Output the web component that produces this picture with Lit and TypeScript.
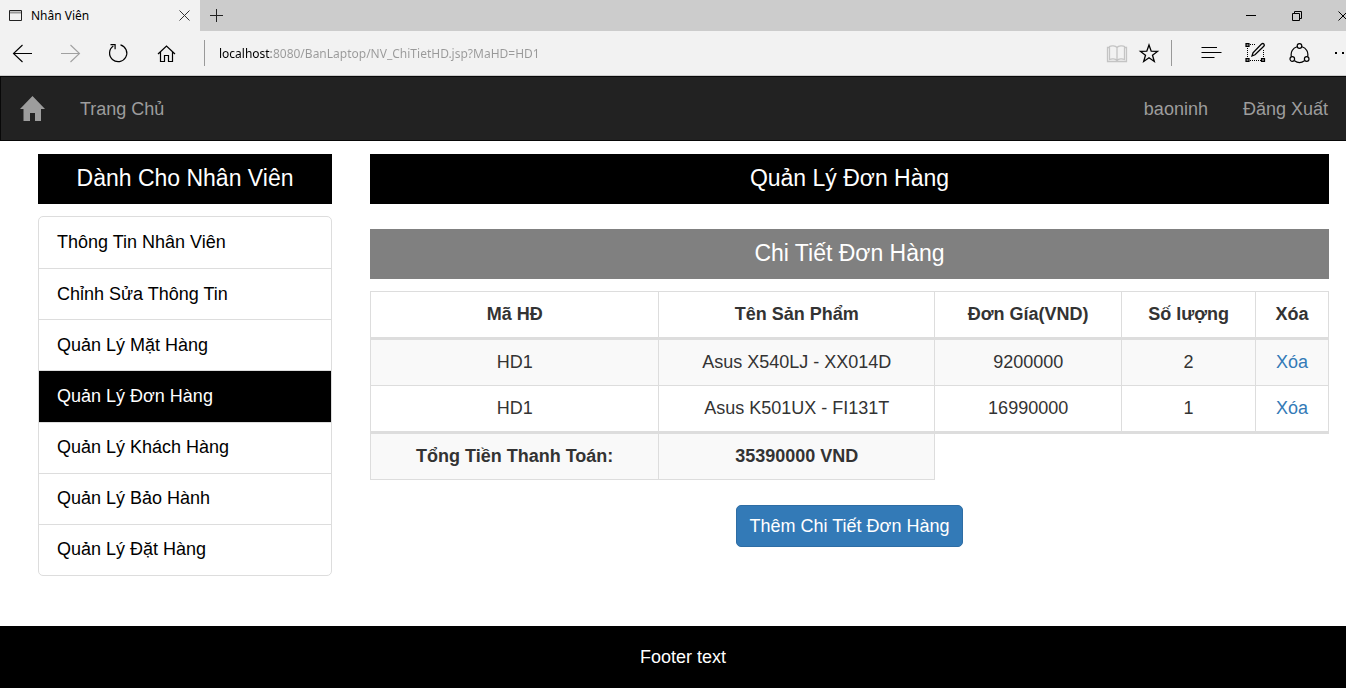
import { LitElement, html, css, svg } from "lit";
import { customElement, state } from "lit/decorators.js";

interface OrderLine {
  order: string;
  product: string;
  price: number;
  quantity: number;
}

const ICONS = {
  tab: svg`<path d="M1.5 2.5h12v10h-12z" stroke="#222"/><path d="M2 4.5h11" stroke="#999" stroke-width="2"/>`,
  close: svg`<path d="M2.5 2.5l10 10M12.500 2.500l-10 10" stroke="#333"/>`,
  plus: svg`<path d="M7.500 1v13M1 7.500h13" stroke="#222"/>`,
};

/** Edge-style tab strip and address bar. */
@customElement("browser-chrome")
export class BrowserChrome extends LitElement {
  static styles = css`
    :host {
      display: block;
      font-family: "Noto Sans", "Open Sans", sans-serif;
      font-size: 12px;
      color: #000;
      border-bottom: 1px solid #ccc;
    }
    svg {
      display: block;
      fill: none;
      stroke: currentColor;
    }
    button {
      display: flex;
      align-items: center;
      justify-content: center;
      padding: 0;
      border: 0;
      background: none;
      color: inherit;
      flex: none;
    }
    .strip {
      display: flex;
      height: 31px;
      background: #ccc;
    }
    .tab {
      display: flex;
      align-items: center;
      gap: 7px;
      width: 200px;
      padding: 0 8px;
      box-sizing: border-box;
      background: #f2f2f2;
    }
    .tab-title {
      flex: 1;
    }
    .new-tab {
      width: 32px;
    }
    .window-buttons {
      display: flex;
      margin-left: auto;
    }
    .window-buttons button {
      width: 46px;
    }
    .toolbar {
      display: flex;
      align-items: center;
      height: 44px;
      padding: 0 11px 0 10px;
      background: #f2f2f2;
    }
    .nav-buttons,
    .actions {
      display: flex;
      flex: none;
    }
    .nav-buttons {
      gap: 22px;
    }
    .actions {
      gap: 20px;
    }
    .page-actions {
      gap: 8px;
    }
    .dim {
      color: #a0a0a0;
    }
    .faint {
      color: #c4c4c4;
    }
    .rule {
      width: 1px;
      height: 26px;
      background: #999;
      flex: none;
    }
    .rule-left {
      margin: 0 14px 0 24px;
    }
    .rule-right {
      margin: 0 27px 0 10px;
    }
    .address {
      flex: 1;
      min-width: 0;
      height: 26px;
      padding: 0;
      border: 0;
      outline: 0;
      font: inherit;
      color: transparent;
      background: linear-gradient(to right, #000 52px, #999 52px);
      -webkit-background-clip: text;
      background-clip: text;
    }
  `;

  render() {
    return html`
      <div class="strip">
        <div class="tab">
          <svg width="16" height="16" viewBox="0 0 16 16">${ICONS.tab}</svg>
          <span class="tab-title">Nhân Viên</span>
          <button aria-label="Close tab">
            <svg width="15" height="15" viewBox="0 0 15 15">${ICONS.close}</svg>
          </button>
        </div>
        <button class="new-tab" aria-label="New tab">
          <svg width="15" height="15" viewBox="0 0 15 15">${ICONS.plus}</svg>
        </button>
        <div class="window-buttons">
          <button aria-label="Minimize">
            <svg width="12" height="12" viewBox="0 0 12 12"><path d="M1 5.500h10" /></svg>
          </button>
          <button aria-label="Restore">
            <svg width="12" height="12" viewBox="0 0 12 12">
              <path d="M1.500 3.500h7v7h-7zM3.500 3.500v-2h7v7h-2" />
            </svg>
          </button>
          <button aria-label="Close">
            <svg width="12" height="12" viewBox="0 0 12 12"><path d="M1.500 1.500l9 9M10.500 1.500l-9 9" /></svg>
          </button>
        </div>
      </div>
      <div class="toolbar">
        <div class="nav-buttons">
          <button aria-label="Back">
            <svg width="26" height="24" viewBox="0 0 26 24" stroke-width="1.100">
              <path d="M3.500 12.500H22M12.500 4l-9 8.500 9 8.500" />
            </svg>
          </button>
          <button class="dim" aria-label="Forward">
            <svg width="26" height="24" viewBox="0 0 26 24" stroke-width="1.100">
              <path d="M3 12.500h18.500M12.500 4l9 8.500-9 8.500" />
            </svg>
          </button>
          <button aria-label="Refresh">
            <svg width="26" height="24" viewBox="0 0 26 24" stroke-width="1.200">
              <path d="M14.500 3.800a8.600 8.600 0 1 1-7.200 1.200M4.500 3.600h4.600v4.700" />
            </svg>
          </button>
          <button aria-label="Home">
            <svg width="26" height="24" viewBox="0 0 26 24" stroke-width="1.200">
              <path d="M4 13l8.500-8 8.500 8M6.500 11v9.500h4v-6h4v6h4V11" />
            </svg>
          </button>
        </div>
        <span class="rule rule-left"></span>
        <input
          class="address"
          type="text"
          aria-label="Address"
          spellcheck="false"
          value="localhost:8080/BanLaptop/NV_ChiTietHD.jsp?MaHD=HD1"
        />
        <div class="actions page-actions">
          <button class="faint" aria-label="Reading view">
            <svg width="24" height="24" viewBox="0 0 24 24">
              <path
                d="M12 6.500c-1.500-2-6-2-7.500-1v13c2-1 6-1 7.500 1 1.500-2 5.500-2 7.500-1v-13c-1.500-1-6-1-7.500 1zM12 6v13M4 6.500H2.500v14h19v-14H20"
                stroke-width="1.300"
              />
            </svg>
          </button>
          <button aria-label="Favorites">
            <svg width="24" height="24" viewBox="0 0 24 24" stroke-width="1.300">
              <path d="M12 4l2.200 6.200 6.300.2-5 3.800 1.800 6.300-5.300-3.800-5.300 3.800 1.800-6.300-5-3.800 6.300-.2z" />
            </svg>
          </button>
        </div>
        <span class="rule rule-right"></span>
        <div class="actions">
          <button aria-label="Hub">
            <svg width="24" height="24" viewBox="0 0 24 24" stroke-width="1">
              <path d="M2.500 6.500h15.500M2.500 11.500h20M2.500 16.500h13" />
            </svg>
          </button>
          <button aria-label="Web note">
            <svg width="24" height="24" viewBox="0 0 24 24">
              <path d="M7 3.500h6M4.500 7v10M20.500 9v8M7 19.500h11" stroke-dasharray="1 1" />
              <path
                d="M3 2.500h3v3H3zM3 17.500h3v3H3zM18.500 17.500h3v3h-3z"
                fill="#777"
                stroke-width="1.200"
              />
              <path d="M9 15l1-3.200L18.500 3q1.500-1 2.500.2.800 1-.2 2L12 13.800z" stroke-width="1.300" />
            </svg>
          </button>
          <button aria-label="Share">
            <svg width="24" height="24" viewBox="0 0 24 24" stroke-width="1.200">
              <circle cx="12.500" cy="5" r="2.300" />
              <circle cx="5.300" cy="18" r="2.300" />
              <circle cx="19.700" cy="18" r="2.300" />
              <path d="M10 5.700a8.300 8.300 0 0 0-5.600 10M15 5.700a8.300 8.300 0 0 1 5.600 10M7.500 19.800a8.300 8.300 0 0 0 10 0" />
            </svg>
          </button>
          <button aria-label="More">
            <svg width="24" height="24" viewBox="0 0 24 24">
              <path d="M4 12h2M11 12h2M18 12h2" stroke-width="2" />
            </svg>
          </button>
        </div>
      </div>
    `;
  }
}

@customElement("app-root")
export class AppRoot extends LitElement {
  static styles = css`
    :host {
      display: block;
      overflow: hidden;
      margin-right: 8px;
      background: #fff;
      font-family: "Liberation Sans", Arial, sans-serif;
      font-size: 18px;
      line-height: 25px;
      color: #333;
    }
    a {
      color: inherit;
      text-decoration: none;
    }
    .window {
      display: flex;
      flex-direction: column;
      min-height: 100vh;
      margin-right: -20px;
    }
    .navbar {
      display: flex;
      align-items: center;
      gap: 35px;
      padding: 19px 37px 18px 19px;
      background: #222;
      border: 1px solid #080808;
      color: #9d9d9d;
    }
    .navbar svg {
      display: block;
      fill: currentColor;
    }
    .push {
      margin-left: auto;
    }
    .content {
      display: grid;
      grid-template-columns: minmax(0, 294fr) minmax(0, 959fr);
      gap: 38px;
      align-items: start;
      flex: 1;
      padding: 13px 37px 50px 38px;
    }
    .title {
      margin: 0;
      padding: 11px 0 13px;
      font-size: 23px;
      line-height: 26px;
      font-weight: 400;
      text-align: center;
      color: #fff;
      background: #000;
    }
    .title-sub {
      margin-top: 25px;
      background: gray;
    }
    .menu {
      display: grid;
      grid-auto-rows: 1fr;
      min-height: 360px;
      box-sizing: border-box;
      margin-top: 12px;
      border: 1px solid #ddd;
      border-radius: 5px;
      overflow: hidden;
    }
    .menu-item {
      display: flex;
      align-items: center;
      padding: 12px 18px;
      color: #000;
    }
    .menu-item + .menu-item {
      border-top: 1px solid #ddd;
    }
    .menu .current {
      color: #fff;
      background: #000;
    }
    table {
      width: 100%;
      margin-top: 12px;
      table-layout: fixed;
      border-collapse: collapse;
      text-align: center;
    }
    th,
    td {
      padding: 10px 0;
      border: 1px solid #ddd;
    }
    thead th,
    tbody tr:last-child td {
      border-bottom-width: 3px;
    }
    tbody tr:nth-child(odd) td,
    tfoot th {
      background: #f9f9f9;
    }
    .c-order {
      width: 30.1%;
    }
    .c-product {
      width: 28.8%;
    }
    .c-price {
      width: 19.5%;
    }
    .c-quantity {
      width: 14%;
    }
    .c-delete {
      width: 7.6%;
    }
    .link {
      color: #337ab7;
    }
    .add {
      display: block;
      margin: 25px auto 0;
      padding: 8px 13px 7px;
      border: 1px solid #2e6da4;
      border-radius: 5px;
      font: inherit;
      color: #fff;
      background: #337ab7;
    }
    .footer {
      padding: 19px 0 18px;
      text-align: center;
      color: #fff;
      background: #000;
    }
  `;

  @state() private current = 3;

  private menu = [
    "Thông Tin Nhân Viên",
    "Chỉnh Sửa Thông Tin",
    "Quản Lý Mặt Hàng",
    "Quản Lý Đơn Hàng",
    "Quản Lý Khách Hàng",
    "Quản Lý Bảo Hành",
    "Quản Lý Đặt Hàng",
  ];

  private lines: OrderLine[] = [
    { order: "HD1", product: "Asus X540LJ - XX014D", price: 9200000, quantity: 2 },
    { order: "HD1", product: "Asus K501UX - FI131T", price: 16990000, quantity: 1 },
  ];

  render() {
    const total = this.lines.reduce((sum, l) => sum + l.price * l.quantity, 0);
    return html`
      <div class="window">
        <browser-chrome></browser-chrome>
        <nav class="navbar">
          <a href="#" aria-label="Home">
            <svg width="25" height="26" viewBox="0 0 25 26">
              <path d="M12.500 0L25 13h-4v12h-6v-8h-5v8H3.500V13H0z" />
            </svg>
          </a>
          <a href="#">Trang Chủ</a>
          <a class="push" href="#">baoninh</a>
          <a href="#">Đăng Xuất</a>
        </nav>
        <main class="content">
          <aside>
            <h2 class="title">Dành Cho Nhân Viên</h2>
            <nav class="menu">
              ${this.menu.map(
                (label, i) => html`<a
                  href="#"
                  class="menu-item ${i === this.current ? "current" : ""}"
                  @click=${() => (this.current = i)}
                  >${label}</a
                >`
              )}
            </nav>
          </aside>
          <section>
            <h2 class="title">Quản Lý Đơn Hàng</h2>
            <h3 class="title title-sub">Chi Tiết Đơn Hàng</h3>
            <table>
              <colgroup>
                <col class="c-order" />
                <col class="c-product" />
                <col class="c-price" />
                <col class="c-quantity" />
                <col class="c-delete" />
              </colgroup>
              <thead>
                <tr>
                  <th>Mã HĐ</th>
                  <th>Tên Sản Phẩm</th>
                  <th>Đơn Gía(VND)</th>
                  <th>Số lượng</th>
                  <th>Xóa</th>
                </tr>
              </thead>
              <tbody>
                ${this.lines.map(
                  (l) => html`<tr>
                    <td>${l.order}</td>
                    <td>${l.product}</td>
                    <td>${l.price}</td>
                    <td>${l.quantity}</td>
                    <td><a class="link" href="#">Xóa</a></td>
                  </tr>`
                )}
              </tbody>
              <tfoot>
                <tr>
                  <th>Tổng Tiền Thanh Toán:</th>
                  <th>${total} VND</th>
                </tr>
              </tfoot>
            </table>
            <button class="add">Thêm Chi Tiết Đơn Hàng</button>
          </section>
        </main>
        <footer class="footer">Footer text</footer>
      </div>
    `;
  }
}
